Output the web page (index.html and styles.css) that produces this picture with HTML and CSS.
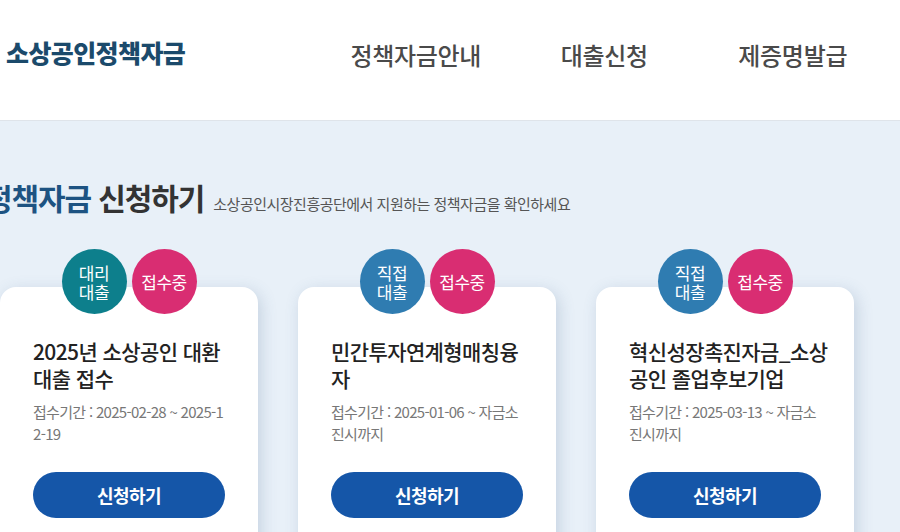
FILE: index.html
```html
<!DOCTYPE html>
<html lang="ko">
<head>
    <meta charset="UTF-8">
    <meta name="viewport" content="width=device-width, initial-scale=1.0">
    <title>소상공인정책자금</title>
    <link rel="stylesheet" href="styles.css">
</head>
<body>
    <header class="header">
        <div class="logo">소상공인정책자금</div>
        <nav class="nav">
            <a class="nav-item" href="#">정책자금안내</a>
            <a class="nav-item" href="#">대출신청</a>
            <a class="nav-item" href="#">제증명발급</a>
        </nav>
    </header>

    <main class="main">
        <div class="section-head">
            <h2 class="section-title"><span class="point">정책자금</span> 신청하기</h2>
            <p class="section-desc">소상공인시장진흥공단에서 지원하는 정책자금을 확인하세요</p>
        </div>

        <div class="card-list">
            <div class="card">
                <div class="badges">
                    <span class="badge badge-agent">대리<br>대출</span>
                    <span class="badge badge-open">접수중</span>
                </div>
                <h3 class="card-title">2025년 소상공인 대환 대출 접수</h3>
                <p class="card-date">접수기간 : 2025-02-28 ~ 2025-12-19</p>
                <button class="apply-button">신청하기</button>
            </div>

            <div class="card">
                <div class="badges">
                    <span class="badge badge-direct">직접<br>대출</span>
                    <span class="badge badge-open">접수중</span>
                </div>
                <h3 class="card-title">민간투자연계형매칭융자</h3>
                <p class="card-date">접수기간 : 2025-01-06 ~ 자금소진시까지</p>
                <button class="apply-button">신청하기</button>
            </div>

            <div class="card">
                <div class="badges">
                    <span class="badge badge-direct">직접<br>대출</span>
                    <span class="badge badge-open">접수중</span>
                </div>
                <h3 class="card-title">혁신성장촉진자금_소상공인 졸업후보기업</h3>
                <p class="card-date">접수기간 : 2025-03-13 ~ 자금소진시까지</p>
                <button class="apply-button">신청하기</button>
            </div>
        </div>
    </main>
</body>
</html>
```

FILE: styles.css
```css
* {
    margin: 0;
    padding: 0;
    box-sizing: border-box;
}

body {
    background: #e8f0f8;
    font-family: "Noto Sans CJK KR", "Noto Sans", sans-serif;
    color: #222222;
    overflow: hidden;
    height: 532px;
}

/* 상단 헤더 */
.header {
    height: 121px;
    background: #ffffff;
    border-bottom: 1px solid #dfe4ea;
    display: flex;
    align-items: center;
    justify-content: space-between;
    padding: 0 13px 16px 6px;
}

.logo {
    color: #1b4a6b;
    font-size: 25px;
    font-weight: 900;
    letter-spacing: -0.6px;
}

.nav {
    display: grid;
    grid-template-columns: repeat(3, 188.5px);
    padding-top: 4px;
}

.nav-item {
    color: #4a4a4a;
    font-size: 24px;
    font-weight: 500;
    text-align: center;
    text-decoration: none;
    letter-spacing: -0.3px;
}

/* 본문 */
.main {
    padding-top: 57px;
}

.section-head {
    display: flex;
    align-items: baseline;
    margin-left: -15px;
}

.section-title {
    font-size: 30px;
    font-weight: 700;
    color: #333333;
    letter-spacing: -1.1px;
    line-height: 1.3;
}

.section-title .point {
    color: #1d5382;
}

.section-desc {
    font-size: 15px;
    color: #555555;
    letter-spacing: -0.5px;
    margin-left: 9px;
}

.card-list {
    display: flex;
    gap: 40px;
    margin-top: 70px;
}

.card {
    width: 258px;
    flex-shrink: 0;
    background: #ffffff;
    border-radius: 16px;
    padding: 0 33px 40px 33px;
    box-shadow: 3px 4px 16px rgba(70, 100, 140, 0.22);
}

.badges {
    display: flex;
    justify-content: center;
    gap: 5px;
    margin-top: -38px;
}

.badge {
    width: 65px;
    height: 65px;
    border-radius: 50%;
    display: flex;
    align-items: center;
    justify-content: center;
    text-align: center;
    color: #ffffff;
    font-size: 17px;
    line-height: 19px;
    letter-spacing: -0.5px;
}

.badge-agent {
    background: #0d7f8c;
}

.badge-direct {
    background: #2f7cb1;
}

.badge-open {
    background: #d92d72;
}

.card-title {
    margin-top: 24px;
    margin-right: -7px;
    font-size: 21px;
    font-weight: 500;
    line-height: 27px;
    letter-spacing: -0.6px;
    color: #222222;
    word-break: break-all;
}

.card-date {
    margin-top: 9px;
    font-size: 15px;
    line-height: 22px;
    color: #777777;
    letter-spacing: -0.7px;
    word-break: break-all;
}

.apply-button {
    display: block;
    width: 100%;
    height: 46px;
    margin-top: 27px;
    border: none;
    border-radius: 23px;
    background: #1556a8;
    color: #ffffff;
    font-family: inherit;
    font-size: 18px;
    font-weight: 700;
    letter-spacing: -0.5px;
    cursor: pointer;
}
```
